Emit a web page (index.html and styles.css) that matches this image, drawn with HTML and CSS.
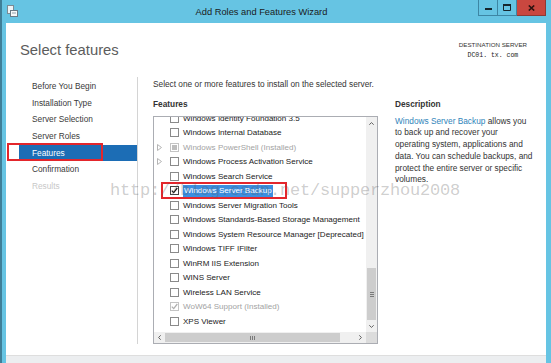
FILE: index.html
```html
<!DOCTYPE html>
<html lang="en">
<head>
    <meta charset="UTF-8">
    <title>Add Roles and Features Wizard</title>
    <link rel="stylesheet" href="styles.css">
</head>
<body>

    <div class="window">
        <!-- Title bar -->
        <div class="titlebar">
            <svg class="app-icon" width="11" height="12" viewBox="0 0 11 12">
                <rect x="0.5" y="0.5" width="6" height="8" fill="#eef3f6" stroke="#7b8b95"/>
                <rect x="3.5" y="5.5" width="7" height="6" fill="#f6f8f9" stroke="#6a7b86"/>
                <line x1="5" y1="8" x2="9" y2="8" stroke="#8fa0aa"/>
            </svg>
            <div class="title">Add Roles and Features Wizard</div>
            <div class="controls">
                <span class="ctl ctl-min">
                    <svg width="7" height="6" viewBox="0 0 7 6"><rect x="0" y="3" width="7" height="2" fill="#16262d"/></svg>
                </span>
                <span class="ctl ctl-max">
                    <svg width="8" height="7" viewBox="0 0 8 7"><path d="M0.5 1.5h7v5h-7z" fill="none" stroke="#16262d"/><rect x="0" y="0" width="8" height="2" fill="#16262d"/></svg>
                </span>
                <span class="ctl ctl-close">
                    <svg width="7" height="6" viewBox="0 0 7 6"><path d="M0.8 0.5l5.4 5M6.2 0.5l-5.4 5" stroke="#2b120f" stroke-width="1.6"/></svg>
                </span>
            </div>
        </div>

        <div class="client">
            <div class="content">
                <div class="page-head">
                    <h1>Select features</h1>
                    <div class="dest">
                        <div class="dest-label">DESTINATION SERVER</div>
                        <div class="dest-name">DC01. tx. com</div>
                    </div>
                </div>

                <div class="page-body">
                    <!-- Wizard steps -->
                    <ul class="steps">
                        <li>Before You Begin</li>
                        <li>Installation Type</li>
                        <li>Server Selection</li>
                        <li>Server Roles</li>
                        <li class="current">Features</li>
                        <li>Confirmation</li>
                        <li class="disabled">Results</li>
                    </ul>

                    <div class="main">
                        <p class="intro">Select one or more features to install on the selected server.</p>
                        <div class="columns">
                            <div class="features">
                                <h2>Features</h2>
                                <div class="listbox">
                                    <div class="items">
                                        <div class="items-inner">
                                            <div class="row"><span class="exp"></span><span class="box"></span>Windows Identity Foundation 3.5</div>
                                            <div class="row"><span class="exp"></span><span class="box"></span>Windows Internal Database</div>
                                            <div class="row installed"><span class="exp"><svg width="5" height="7" viewBox="0 0 5 7"><path d="M0.5 0.5l4 3-4 3z" fill="none" stroke="#b5b5b5"/></svg></span><span class="box"><span class="fill"></span></span>Windows PowerShell (Installed)</div>
                                            <div class="row"><span class="exp"><svg width="5" height="7" viewBox="0 0 5 7"><path d="M0.5 0.5l4 3-4 3z" fill="none" stroke="#b5b5b5"/></svg></span><span class="box"></span>Windows Process Activation Service</div>
                                            <div class="row"><span class="exp"></span><span class="box"></span>Windows Search Service</div>
                                            <div class="row"><span class="exp"></span><span class="box box-on"><svg width="7" height="7" viewBox="0 0 7 7"><path d="M0.8 3.6l1.9 2L6.3 1" fill="none" stroke="#1a1a1a" stroke-width="1.3"/></svg></span><span class="sel">Windows Server Backup</span></div>
                                            <div class="row"><span class="exp"></span><span class="box"></span>Windows Server Migration Tools</div>
                                            <div class="row"><span class="exp"></span><span class="box"></span>Windows Standards-Based Storage Management</div>
                                            <div class="row"><span class="exp"></span><span class="box"></span>Windows System Resource Manager [Deprecated]</div>
                                            <div class="row"><span class="exp"></span><span class="box"></span>Windows TIFF IFilter</div>
                                            <div class="row"><span class="exp"></span><span class="box"></span>WinRM IIS Extension</div>
                                            <div class="row"><span class="exp"></span><span class="box"></span>WINS Server</div>
                                            <div class="row"><span class="exp"></span><span class="box"></span>Wireless LAN Service</div>
                                            <div class="row installed"><span class="exp"></span><span class="box"><svg width="7" height="7" viewBox="0 0 7 7"><path d="M0.8 3.6l1.9 2L6.3 1" fill="none" stroke="#b0b0b0" stroke-width="1.3"/></svg></span>WoW64 Support (Installed)</div>
                                            <div class="row"><span class="exp"></span><span class="box"></span>XPS Viewer</div>
                                        </div>
                                    </div>
                                    <div class="vscroll">
                                        <div class="sb-btn sb-up"><svg width="5" height="3" viewBox="0 0 5 3"><path d="M0.3 2.7L2.5 0.6 4.7 2.7" fill="none" stroke="#606060"/></svg></div>
                                        <div class="sb-track">
                                            <div class="vthumb"><svg width="4" height="5" viewBox="0 0 4 5"><path d="M0 0.5h4M0 2.5h4M0 4.5h4" stroke="#7a7a7a"/></svg></div>
                                        </div>
                                        <div class="sb-btn sb-down"><svg width="5" height="3" viewBox="0 0 5 3"><path d="M0.3 0.3L2.5 2.4 4.7 0.3" fill="none" stroke="#606060"/></svg></div>
                                    </div>
                                    <div class="hscroll">
                                        <div class="sb-btn sb-side"><svg width="3" height="5" viewBox="0 0 3 5"><path d="M2.7 0.3L0.6 2.5 2.7 4.7" fill="none" stroke="#606060"/></svg></div>
                                        <div class="sb-htrack">
                                            <div class="hthumb"><svg width="5" height="4" viewBox="0 0 5 4"><path d="M0.5 0v4M2.5 0v4M4.5 0v4" stroke="#7a7a7a"/></svg></div>
                                        </div>
                                        <div class="sb-btn sb-side"><svg width="3" height="5" viewBox="0 0 3 5"><path d="M0.3 0.3L2.4 2.5 0.3 4.7" fill="none" stroke="#606060"/></svg></div>
                                    </div>
                                    <div class="corner"></div>
                                </div>
                            </div>

                            <div class="desc">
                                <h2>Description</h2>
                                <p><a href="#">Windows Server Backup</a> allows you<br>to back up and recover your<br>operating system, applications and<br>data. You can schedule backups, and<br>protect the entire server or specific<br>volumes.</p>
                            </div>
                        </div>
                    </div>
                </div>
            </div>
            <div class="footer"></div>
        </div>
    </div>

    <!-- annotations drawn over the screenshot -->
    <div class="mark mark-nav"></div>
    <div class="mark mark-item"></div>
    <div class="watermark">http://blog.csdn.net/supperzhou2008</div>

</body>
</html>
```

FILE: styles.css
```css
* {
    box-sizing: border-box;
}

body {
    margin: 0;
    width: 551px;
    height: 363px;
    overflow: hidden;
    position: relative;
    background-color: #3f7f98;
    font-family: "Liberation Sans", Arial, sans-serif;
    font-size: 8.3px;
    color: #333;
}

.window {
    margin-left: 2px;
    height: 363px;
    background-color: #66c4e3;
    padding: 0 5px 0 4px;
    display: flex;
    flex-direction: column;
}

.titlebar {
    height: 23px;
    flex-shrink: 0;
    display: flex;
    align-items: flex-start;
}

.app-icon {
    margin: 5px 0 0 1px;
}

.title {
    flex: 1;
    text-align: center;
    padding: 1px 0 0 27px;
    line-height: 22px;
    font-size: 9.3px;
    color: #1b1b1b;
}

.controls {
    display: flex;
    height: 16px;
}

.ctl {
    height: 16px;
    display: flex;
    align-items: center;
    justify-content: center;
    border: 1px solid #3d86a4;
    border-top: none;
}

.ctl-min {
    width: 20px;
}

.ctl-max {
    width: 19px;
    border-left: none;
}

.ctl-close {
    width: 29px;
    border-left: none;
    border-color: #8d3a34;
    background-color: #c9473f;
}

.client {
    flex: 1;
    display: flex;
    flex-direction: column;
}

.content {
    flex: 1;
    background-color: #fff;
    display: flex;
    flex-direction: column;
}

.footer {
    height: 8px;
    background-color: #eceef0;
    border-top: 1px solid #dedede;
}

.page-head {
    height: 54px;
    display: flex;
    justify-content: space-between;
    padding: 19px 19px 0 14px;
}

h1 {
    margin: 0;
    font-weight: normal;
    font-size: 14.8px;
    line-height: 17px;
    color: #5c5c5c;
}

.dest {
    margin-top: -1px;
    text-align: center;
}

.dest-label {
    font-size: 6.2px;
    line-height: 8px;
    color: #333;
}

.dest-name {
    margin-top: 2px;
    font-family: "Liberation Mono", monospace;
    font-size: 6.5px;
    line-height: 9px;
    color: #222;
}

.page-body {
    flex: 1;
    display: flex;
    padding-bottom: 11px;
}

.steps {
    list-style: none;
    margin: 0;
    padding: 1px 0 0;
    width: 132px;
    border-right: 1px solid #d4d4d4;
}

.steps li {
    margin-left: 13px;
    padding-left: 13px;
    line-height: 16.67px;
    color: #3a3a3a;
}

.steps li.current {
    background-color: #1c6db5;
    color: #fff;
}

.steps li.disabled {
    color: #c8c8c8;
}

.main {
    flex: 1;
    padding-left: 15px;
}

.intro {
    margin: 0;
    padding-top: 1px;
    line-height: 12px;
}

.columns {
    display: flex;
    margin-top: 8px;
}

.features {
    width: 225px;
}

h2 {
    margin: 0;
    font-size: 8.3px;
    line-height: 12px;
    font-weight: bold;
    color: #333;
}

.listbox {
    margin-top: 6px;
    height: 228px;
    border: 1px solid #abadb3;
    display: grid;
    grid-template-columns: 1fr 11px;
    grid-template-rows: 1fr 11px;
}

.items {
    overflow: hidden;
}

.items-inner {
    margin-top: -6px;
}

.row {
    height: 14.5px;
    display: flex;
    align-items: center;
    padding-left: 3px;
    white-space: nowrap;
    font-size: 8.05px;
    color: #222;
}

.row.installed {
    color: #a3a3a3;
}

.exp {
    width: 13px;
    flex-shrink: 0;
    display: flex;
    align-items: center;
}

.box {
    width: 9px;
    height: 9px;
    flex-shrink: 0;
    margin-right: 4px;
    border: 1px solid #8a8a8a;
    background-color: #fff;
    display: flex;
    align-items: center;
    justify-content: center;
}

.box-on {
    border-color: #444;
}

.row.installed .box {
    border-color: #c4c4c4;
}

.fill {
    width: 5px;
    height: 5px;
    background-color: #bdbdbd;
}

.sel {
    background-color: #3b8ee0;
    color: #fff;
    padding: 0 1px;
    line-height: 12px;
}

.vscroll {
    display: flex;
    flex-direction: column;
    background-color: #f0f0f0;
}

.sb-btn {
    flex-shrink: 0;
    display: flex;
    align-items: center;
    justify-content: center;
}

.sb-up {
    height: 13px;
}

.sb-down {
    height: 12px;
}

.sb-track {
    flex: 1;
    display: flex;
    flex-direction: column;
    justify-content: flex-end;
}

.vthumb {
    height: 52px;
    margin: 0 1px;
    background-color: #cdcdcd;
    display: flex;
    align-items: center;
    justify-content: center;
}

.hscroll {
    display: flex;
    background-color: #f0f0f0;
}

.sb-side {
    width: 11px;
}

.sb-htrack {
    flex: 1;
    display: flex;
}

.hthumb {
    width: 175px;
    margin: 1px 0;
    background-color: #cdcdcd;
    display: flex;
    align-items: center;
    justify-content: center;
}

.corner {
    background-color: #dcdcdc;
}

.desc {
    margin-left: 17px;
}

.desc p {
    margin: 5.5px 0 0;
    line-height: 11.8px;
    white-space: nowrap;
}

.desc a {
    color: #2f84ba;
    text-decoration: none;
}

.mark {
    position: absolute;
    border: 2px solid #e3262c;
}

.mark-nav {
    left: 7px;
    top: 143px;
    width: 96px;
    height: 18px;
}

.mark-item {
    left: 161px;
    top: 182px;
    width: 126px;
    height: 17px;
}

.watermark {
    position: absolute;
    left: 110px;
    top: 181px;
    font-family: "Liberation Mono", monospace;
    font-size: 17px;
    line-height: 20px;
    letter-spacing: -0.2px;
    white-space: nowrap;
    color: rgba(90, 90, 90, 0.3);
    pointer-events: none;
}
```
